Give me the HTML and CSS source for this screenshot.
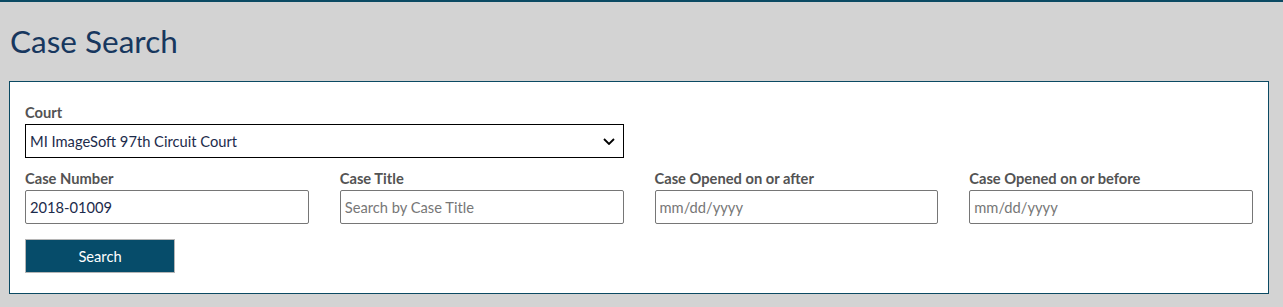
FILE: index.html
```html
<!DOCTYPE html>
<html lang="en">
<head>
<meta charset="utf-8">
<title>Case Search</title>
<link rel="stylesheet" href="styles.css">
</head>
<body>
<div class="page">
  <h1 class="title">Case Search</h1>
  <form class="panel">
    <div class="field field-wide">
      <label class="label" for="court">Court</label>
      <div class="select-wrap">
        <select id="court" class="select">
          <option>MI ImageSoft 97th Circuit Court</option>
        </select>
        <svg class="chevron" width="12" height="7" viewBox="0 0 12 7"><path d="M1 1 L6 6 L11 1" fill="none" stroke="#000" stroke-width="1.8"/></svg>
      </div>
    </div>
    <div class="row">
      <div class="field">
        <label class="label" for="num">Case Number</label>
        <input id="num" class="input" type="text" value="2018-01009">
      </div>
      <div class="field">
        <label class="label" for="title">Case Title</label>
        <input id="title" class="input" type="text" placeholder="Search by Case Title">
      </div>
      <div class="field">
        <label class="label" for="after">Case Opened on or after</label>
        <input id="after" class="input" type="text" placeholder="mm/dd/yyyy">
      </div>
      <div class="field">
        <label class="label" for="before">Case Opened on or before</label>
        <input id="before" class="input" type="text" placeholder="mm/dd/yyyy">
      </div>
    </div>
    <button class="button" type="button">Search</button>
  </form>
</div>
</body>
</html>
```
FILE: styles.css
```css
html, body {
  margin: 0;
  padding: 0;
}
body {
  background: #d3d3d3;
  border-top: 2px solid #0b4a63;
  font-family: Lato, "Open Sans", "Liberation Sans", sans-serif;
  height: 305px;
}
.page {
  padding: 0 14px 0 9px;
}
.title {
  margin: 0;
  padding: 19px 0 0 1px;
  height: 58px;
  font-size: 31.5px;
  font-weight: 400;
  line-height: 40px;
  color: #17375e;
  box-sizing: border-box;
}
.panel {
  margin-top: 21px;
  background: #fff;
  border: 1px solid #0b4a63;
  padding: 20px 15px 20px 15px;
  display: flex;
  flex-direction: column;
}
.row {
  display: grid;
  grid-template-columns: repeat(4, 1fr);
  column-gap: 31px;
  margin-top: 10px;
}
.field {
  display: flex;
  flex-direction: column;
}
.field-wide {
  width: 599px;
}
.label {
  font-size: 14.7px;
  font-weight: 700;
  line-height: 20px;
  color: #535353;
  margin-bottom: 2px;
}
.select-wrap {
  position: relative;
}
.select {
  appearance: none;
  -webkit-appearance: none;
  width: 100%;
  height: 34px;
  box-sizing: border-box;
  border: 1px solid #000;
  border-radius: 0;
  background: #fff;
  font-family: inherit;
  font-size: 14.7px;
  color: #1c2b4b;
  padding: 0 0 0 4px;
  margin: 0;
}
.chevron {
  position: absolute;
  right: 2px;
  top: 14px;
  margin-right: 7px;
  pointer-events: none;
}
.input {
  height: 34px;
  box-sizing: border-box;
  border: 1px solid #767676;
  border-radius: 2px;
  font-family: inherit;
  font-size: 14.7px;
  color: #1c2b4b;
  padding: 0 4px;
  margin: 0;
  width: 100%;
}
.input::placeholder {
  color: #777;
}
.button {
  margin-top: 15px;
  width: 150px;
  height: 34px;
  box-sizing: border-box;
  background: #064c6a;
  border: 1px solid #b5b5b5;
  color: #fff;
  font-family: inherit;
  font-size: 14.7px;
  padding: 0;
  cursor: pointer;
}
```
